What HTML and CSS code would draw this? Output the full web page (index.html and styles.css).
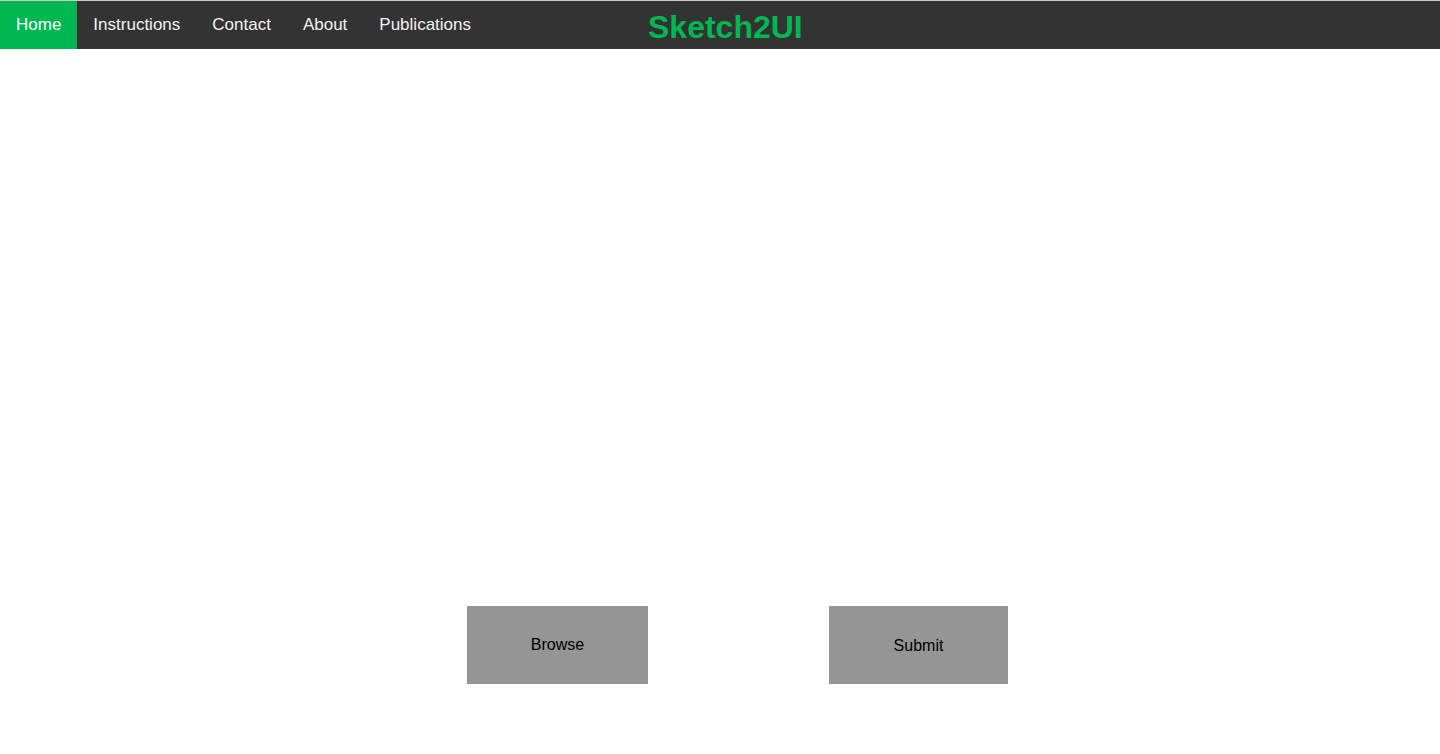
FILE: index.html
```html
<!DOCTYPE html>
<html>
<head>
<meta charset="utf-8">
<link rel="stylesheet" href="styles.css">
</head>
<body>
<header class="topbar">
  <nav class="nav">
    <a class="nav-link active" href="#">Home</a>
    <a class="nav-link" href="#">Instructions</a>
    <a class="nav-link" href="#">Contact</a>
    <a class="nav-link" href="#">About</a>
    <a class="nav-link" href="#">Publications</a>
  </nav>
  <div class="brand">Sketch2UI</div>
</header>
<main class="main">
  <div class="actions">
    <button class="btn">Browse</button>
    <button class="btn btn-submit">Submit</button>
  </div>
</main>
</body>
</html>
```
FILE: styles.css
```css
html, body {
  margin: 0;
  padding: 0;
  background: #ffffff;
  font-family: "Liberation Sans", Arial, sans-serif;
}
.topbar {
  display: flex;
  align-items: stretch;
  height: 48px;
  background: #333333;
  border-top: 1px solid #c9c9c9;
}
.nav {
  display: flex;
}
.nav-link {
  display: flex;
  align-items: center;
  padding: 0 16px 1px;
  color: #f2f2f2;
  font-size: 17px;
  text-decoration: none;
}
.nav-link.active {
  background: #00b84f;
  color: #ffffff;
}
.brand {
  margin-left: 161px;
  display: flex;
  align-items: center;
  padding-top: 4px;
  color: #00b84f;
  font-size: 32px;
  font-weight: bold;
}
.main {
  padding-top: 557px;
}
.actions {
  display: flex;
  padding-left: 467px;
  gap: 181px;
}
.btn {
  width: 181px;
  height: 78px;
  border: none;
  background: #959595;
  color: #000000;
  font-family: "Liberation Sans", Arial, sans-serif;
  font-size: 16px;
  padding: 0;
}
.btn-submit {
  width: 179px;
  padding-top: 2px;
}
```
